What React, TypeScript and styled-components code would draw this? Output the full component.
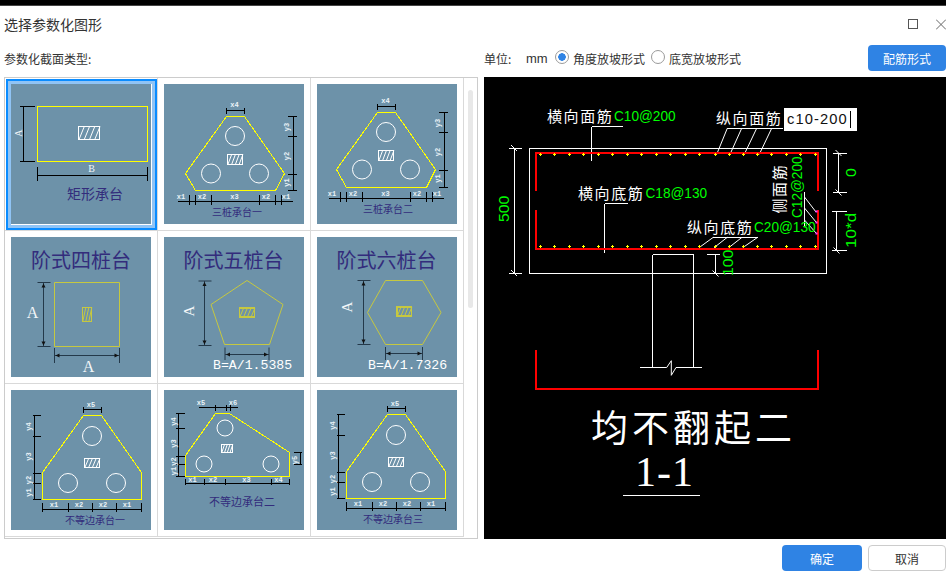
import React, { FC } from 'react';
import styled, { createGlobalStyle } from 'styled-components';

const CJK = '"Noto Sans CJK SC", "Liberation Sans", sans-serif';
const MONO = '"Liberation Mono", "Noto Sans CJK SC", monospace';

const GlobalStyle = createGlobalStyle`
  html, body {
    margin: 0;
    padding: 0;
    background: #fff;
    overflow: hidden;
  }
`;

const Page = styled.div`
  width: 946px;
  height: 576px;
  display: flex;
  flex-direction: column;
  overflow: hidden;
  background: #fff;
  font-family: ${CJK};
  color: #333;
`;

const TopEdge = styled.div`
  height: 5px;
  flex: none;
  background: #000;
  border-bottom: 1px solid #444;
`;

const TitleBar = styled.div`
  height: 39px;
  flex: none;
  display: flex;
  align-items: center;
  justify-content: space-between;
  padding-left: 4px;
`;

const Title = styled.div`
  font-size: 14px;
  color: #333;
  padding-bottom: 4px;
`;

const WindowButtons = styled.div`
  display: flex;
  align-items: center;
  gap: 18px;
  margin-bottom: 3px;
`;

const Toolbar = styled.div`
  height: 32px;
  flex: none;
  display: flex;
`;

const SectionLabel = styled.div`
  width: 480px;
  box-sizing: border-box;
  padding: 5px 0 0 4px;
  font-size: 12px;
  line-height: 17px;
  color: #333;
`;

const Options = styled.div`
  flex: 1;
  display: flex;
  align-items: flex-start;
  font-size: 12px;
  line-height: 17px;
  padding: 5px 0 0 4px;
  color: #333;
`;

const UnitLabel = styled.span`
  width: 42px;
`;

const UnitValue = styled.span`
  font-family: "Liberation Sans", sans-serif;
  font-size: 13px;
  width: 29px;
`;

const RadioDot = styled.span<{ $on?: boolean }>`
  width: 14px;
  height: 14px;
  box-sizing: border-box;
  flex: none;
  border: 1px solid #9a9a9a;
  border-radius: 50%;
  margin: 0 4px 0 0;
  background: ${(p) => (p.$on ? 'radial-gradient(circle, #2f83e4 0 3.5px, #fff 4px)' : '#fff')};
`;

const RadioText = styled.span`
  margin-right: 6px;
  white-space: nowrap;
`;

const PrimaryButton = styled.button<{ $width: number }>`
  width: ${(p) => p.$width}px;
  height: 26px;
  flex: none;
  border: 0;
  border-radius: 4px;
  background: #2f83e4;
  color: #fff;
  font-family: ${CJK};
  font-size: 12px;
  padding: 0;
`;

const RebarButton = styled(PrimaryButton)`
  margin: -5px 0 0 auto;
`;

const GhostButton = styled.button`
  width: 78px;
  height: 26px;
  box-sizing: border-box;
  border: 1px solid #ccc;
  border-radius: 4px;
  background: #fff;
  color: #333;
  font-family: ${CJK};
  font-size: 12px;
  padding: 0;
`;

const Body = styled.div`
  height: 462px;
  flex: none;
  display: flex;
  gap: 6px;
  padding-left: 4px;
`;

const Panel = styled.div`
  width: 474px;
  box-sizing: border-box;
  border: 1px solid #ccc;
  display: flex;
`;

const Grid = styled.div`
  width: 459px;
  display: grid;
  grid-template-columns: repeat(3, 153px);
  grid-auto-rows: 153px;
`;

const Cell = styled.div<{ $selected?: boolean }>`
  position: relative;
  box-sizing: border-box;
  padding: 6px;
  border-right: 1px solid #d9d9d9;
  border-bottom: 1px solid #d9d9d9;

  &::after {
    content: '';
    display: ${(p) => (p.$selected ? 'block' : 'none')};
    position: absolute;
    inset: 1px 0 0 1px;
    border: 2px solid #0a8cff;
    box-shadow: inset 0 0 0 3px #90c4f5;
  }
`;

const Thumb = styled.svg`
  display: block;
  width: 140px;
  height: 140px;
  background: #6d92a9;
`;

const ScrollTrack = styled.div`
  flex: 1;
  display: flex;
  justify-content: center;
  padding-top: 12px;
`;

const ScrollThumb = styled.div`
  width: 5px;
  height: 218px;
  border-radius: 3px;
  background: #e8e8e8;
`;

const Canvas = styled.div`
  position: relative;
  width: 462px;
  height: 462px;
  background: #000;
`;

const Drawing = styled.svg`
  display: block;
  width: 462px;
  height: 462px;
`;

const InlineEditor = styled.div`
  position: absolute;
  left: 300px;
  top: 31px;
  width: 73px;
  height: 23px;
  box-sizing: border-box;
  padding-left: 3px;
  background: #fff;
  color: #111;
  font-family: "Liberation Sans", sans-serif;
  font-size: 14.7px;
  letter-spacing: 1.1px;
  line-height: 23px;
  white-space: nowrap;

  &::after {
    content: '';
    position: absolute;
    left: 66px;
    top: 3px;
    width: 1px;
    height: 17px;
    background: #000;
  }
`;

const Footer = styled.div`
  flex: 1;
  display: flex;
  justify-content: flex-end;
  align-items: flex-start;
  gap: 6px;
  padding-top: 6px;
`;

const TinyText = styled.text`
  font-family: ${MONO};
  font-size: 7px;
  font-weight: 700;
  fill: #eaf2f7;
  text-anchor: middle;
  dominant-baseline: central;
`;

const CapName = styled.text<{ $size: number }>`
  font-family: ${CJK};
  font-size: ${(p) => p.$size}px;
  fill: #332c7c;
  text-anchor: middle;
  dominant-baseline: central;
`;

const DimLetter = styled.text<{ $size: number }>`
  font-family: "Liberation Serif", serif;
  font-size: ${(p) => p.$size}px;
  fill: #f2f6f8;
  text-anchor: middle;
  dominant-baseline: central;
`;

const Formula = styled.text`
  font-family: ${MONO};
  font-size: 13.2px;
  fill: #fff;
  dominant-baseline: central;
`;

const CadNote = styled.text`
  font-family: ${CJK};
  font-size: 15px;
  letter-spacing: 1.6px;
  fill: #fff;
  dominant-baseline: central;
`;

const CadValueText = styled.text`
  font-family: "Liberation Sans", sans-serif;
  font-size: 15px;
  fill: #00ff00;
  dominant-baseline: central;
`;

const CadCaption = styled.text`
  font-family: ${CJK};
  font-size: 37px;
  letter-spacing: 4px;
  fill: #fff;
  dominant-baseline: central;
`;

const CadSection = styled.text`
  font-family: "Liberation Serif", serif;
  font-size: 42px;
  letter-spacing: 1px;
  fill: #fff;
  dominant-baseline: central;
`;

// CAD text is narrower and evenly spaced, so every char gets the same slot
const CadValue: FC<{ x: number; y: number; vertical?: boolean; children: string }> = ({ x, y, vertical, children }) => (
  <CadValueText
    x={x}
    y={y}
    textLength={children.length * 8.8}
    lengthAdjust="spacingAndGlyphs"
    transform={vertical ? `rotate(-90 ${x} ${y})` : undefined}
  >
    {children}
  </CadValueText>
);

type Label = [string, number, number, boolean?];

const Tiny: FC<{ l: Label }> = ({ l: [t, x, y, rotated] }) => (
  <TinyText x={x} y={y} transform={rotated ? `rotate(-90 ${x} ${y})` : undefined}>
    {t}
  </TinyText>
);

const Hatch: FC<{ x: number; y: number; w: number; h: number; color?: string }> = ({ x, y, w, h, color = '#fff' }) => {
  const n = w > h ? 4 : 3;
  const step = w / n;
  const d = Array.from({ length: n }, (_, i) => {
    const x0 = x + step * i + step * 0.1;
    return `M${x0} ${y + h}L${x0 + Math.min(step, h * 0.45)} ${y}`;
  }).join('');
  return (
    <g fill="none" stroke={color} strokeWidth={1}>
      <rect x={x} y={y} width={w} height={h} strokeWidth={1.2} shapeRendering="crispEdges" />
      <path d={d} />
    </g>
  );
};

type Cap = {
  outline: string;
  circles: [number, number][];
  r: number;
  hatch: [number, number, number, number];
  dims: string;
  labels: Label[];
  name: string;
  nameX: number;
  nameY: number;
  nameSize: number;
};

const threePile = (name: string, dx: number, dy: number, by: number): Cap => ({
  outline: `${62.5 + dx},${32.5 + dy} ${80.5 + dx},${32.5 + dy} ${120.5 + dx},${89.5 + dy} ${111.5 + dx},${106.5 + by} ${31.5 + dx},${106.5 + by} ${21.5 + dx},${89.5 + dy}`,
  circles: [
    [71 + dx, 52 + dy],
    [47 + dx, 89.5 + dy],
    [95 + dx, 89.5 + dy],
  ],
  r: 9.5,
  hatch: [63.5 + dx, 70.5 + dy, 15, 10],
  dims:
    `M${62.5 + dx} ${26.5 + dy}H${80.5 + dx}M${62.5 + dx} ${23.5 + dy}V${29.5 + dy}M${80.5 + dx} ${23.5 + dy}V${29.5 + dy}` +
    `M${129.5 + dx} ${32.5 + dy}V${106.5 + by}M${123.5 + dx} ${32.5 + dy}H${132.5 + dx}M${123.5 + dx} ${52.5 + dy}H${132.5 + dx}M${123.5 + dx} ${90.5 + dy}H${132.5 + dx}M${123.5 + dx} ${106.5 + by}H${132.5 + dx}` +
    `M${13.5 + dx} ${117.5 + by}H${128.5 + dx}` +
    [25.5, 31.5, 47.5, 95.5, 111.5, 117.5].map((x) => `M${x + dx} ${110.5 + by}V${120.5 + by}`).join(''),
  labels: [
    ['x4', 70.5 + dx, 20.5 + dy],
    ['y3', 123 + dx, 43 + dy, true],
    ['y2', 123 + dx, 72 + dy, true],
    ['y1', 123 + dx, 98.5 + dy, true],
    ['x1', 17 + dx, 112.5 + by],
    ['x2', 38 + dx, 112.5 + by],
    ['x3', 70.5 + dx, 112.5 + by],
    ['x2', 102 + dx, 112.5 + by],
    ['x1', 122 + dx, 112.5 + by],
  ],
  name,
  nameX: 73 + dx,
  nameY: 127.5 + by,
  nameSize: 10,
});

const unequalFlat = (name: string, dx: number, dy: number, nameX: number): Cap => ({
  outline: `${72.5 + dx},${25.5 + dy} ${90.5 + dx},${25.5 + dy} ${130.5 + dx},${82.5 + dy} ${130.5 + dx},${109.5 + dy} ${31.5 + dx},${109.5 + dy} ${31.5 + dx},${82.5 + dy}`,
  circles: [
    [81 + dx, 46 + dy],
    [57 + dx, 93 + dy],
    [105 + dx, 93 + dy],
  ],
  r: 9.5,
  hatch: [73.5 + dx, 68.5 + dy, 15, 9],
  dims:
    `M${72.5 + dx} ${19.5 + dy}H${90.5 + dx}M${72.5 + dx} ${16.5 + dy}V${22.5 + dy}M${90.5 + dx} ${16.5 + dy}V${22.5 + dy}` +
    `M${23.5 + dx} ${25.5 + dy}V${109.5 + dy}` +
    [25.5, 46.5, 83.5, 93.5, 109.5].map((y) => `M${21.5 + dx} ${y + dy}H${29.5 + dx}`).join('') +
    `M${31.5 + dx} ${119.5 + dy}H${130.5 + dx}` +
    [31.5, 57.5, 81.5, 105.5, 130.5].map((x) => `M${x + dx} ${112.5 + dy}V${121.5 + dy}`).join(''),
  labels: [
    ['x5', 80 + dx, 14.5 + dy],
    ['y4', 17.5 + dx, 36.5 + dy, true],
    ['y3', 17.5 + dx, 66.5 + dy, true],
    ['y2', 17.5 + dx, 90 + dy, true],
    ['y1', 17.5 + dx, 102.5 + dy, true],
    ['x1', 43 + dx, 114.5 + dy],
    ['x2', 68 + dx, 114.5 + dy],
    ['x2', 92 + dx, 114.5 + dy],
    ['x1', 116 + dx, 114.5 + dy],
  ],
  name,
  nameX,
  nameY: 129.5 + dy,
  nameSize: 10,
});

const unequalSlope: Cap = {
  outline: '51.5,23.5 65.5,23.5 125.5,62.5 125.5,86.5 21.5,86.5 21.5,65.5',
  circles: [
    [61, 38],
    [40, 74],
    [107, 74],
  ],
  r: 8,
  hatch: [57.5, 54.5, 11, 8],
  dims:
    'M34.5 17.5H73.5M51.5 14.5V20.5M62.5 14.5V20.5M66.5 14.5V20.5' +
    'M14.5 23.5V86.5M11.5 23.5H20.5M11.5 38.5H20.5M11.5 66.5H20.5M11.5 74.5H20.5M11.5 86.5H20.5' +
    'M136.5 62.5V74.5M129.5 62.5H137.5M129.5 74.5H137.5' +
    'M21.5 93.5H125.5M21.5 88.5V94.5M40.5 88.5V94.5M61.5 88.5V94.5M107.5 88.5V94.5M125.5 88.5V94.5',
  labels: [
    ['x5', 37, 13],
    ['x6', 69, 13],
    ['y4', 10, 31.5, true],
    ['y3', 10, 53.5, true],
    ['y2', 10, 71.5, true],
    ['y1', 10, 81, true],
    ['y5', 131, 70, true],
    ['x1', 28.5, 89.5],
    ['x2', 49, 89.5],
    ['x3', 82.5, 89.5],
    ['x4', 114.5, 89.5],
  ],
  name: '不等边承台二',
  nameX: 78,
  nameY: 110.5,
  nameSize: 11,
};

const CapFigure: FC<{ cap: Cap }> = ({ cap }) => (
  <Thumb viewBox="0 0 140 140">
    <polygon points={cap.outline} fill="none" stroke="#ffff00" shapeRendering="crispEdges" />
    {cap.circles.map(([cx, cy]) => (
      <circle key={`${cx}-${cy}`} cx={cx} cy={cy} r={cap.r} fill="none" stroke="#fff" />
    ))}
    <Hatch x={cap.hatch[0]} y={cap.hatch[1]} w={cap.hatch[2]} h={cap.hatch[3]} />
    <path d={cap.dims} fill="none" stroke="#000" shapeRendering="crispEdges" />
    {cap.labels.map((l, i) => (
      <Tiny key={i} l={l} />
    ))}
    <CapName x={cap.nameX} y={cap.nameY} $size={cap.nameSize}>
      {cap.name}
    </CapName>
  </Thumb>
);

const RectCap: FC = () => (
  <Thumb viewBox="0 0 140 140">
    <rect x={26.5} y={22.5} width={110} height={55} fill="none" stroke="#ffff00" shapeRendering="crispEdges" />
    <Hatch x={67.5} y={42.5} w={21} h={13} />
    <path
      d="M12.5 22.5V77.5M8.5 22.5H23.5M8.5 77.5H23.5M26.5 91.5H136.5M26.5 82.5V96.5M136.5 82.5V96.5"
      fill="none"
      stroke="#000"
      shapeRendering="crispEdges"
    />
    <DimLetter x={7} y={49} $size={10} transform="rotate(-90 7 49)">
      A
    </DimLetter>
    <DimLetter x={80.5} y={84} $size={10}>
      B
    </DimLetter>
    <CapName x={84} y={108.5} $size={14}>
      矩形承台
    </CapName>
  </Thumb>
);

type Stepped = {
  title: string;
  titleX: number;
  outline: string;
  hatch: [number, number, number, number];
  hatchColor: string;
  leftX: number;
  leftTop: number;
  leftBottom: number;
  baseY: number;
  baseLeft: number;
  baseRight: number;
  baseTop: number;
  baseEnd: number;
};

const SteppedDims: FC<{ s: Stepped }> = ({ s }) => {
  const ink = '#24394a';
  const { leftX: x, leftTop: t, leftBottom: b, baseY: y, baseLeft: l, baseRight: r } = s;
  return (
    <g>
      <path
        d={`M${x} ${t}V${b}M${x - 6} ${t}H${x + 7}M${x - 6} ${b}H${x + 7}M${l} ${y}H${r}M${l} ${s.baseTop}V${s.baseEnd}M${r} ${s.baseTop}V${s.baseEnd}`}
        fill="none"
        stroke={ink}
        strokeWidth={1}
      />
      <polygon
        fill="#111"
        points={`${x},${t + 1} ${x - 2},${t + 5} ${x + 2},${t + 5}`}
      />
      <polygon
        fill="#111"
        points={`${x},${b - 1} ${x - 2},${b - 5} ${x + 2},${b - 5}`}
      />
      <polygon
        fill="#111"
        points={`${l + 1},${y} ${l + 5},${y - 2} ${l + 5},${y + 2}`}
      />
      <polygon
        fill="#111"
        points={`${r - 1},${y} ${r - 5},${y - 2} ${r - 5},${y + 2}`}
      />
    </g>
  );
};

const SteppedCap: FC<{ s: Stepped; children: React.ReactNode }> = ({ s, children }) => (
  <Thumb viewBox="0 0 140 140">
    <CapName x={s.titleX} y={22} $size={20}>
      {s.title}
    </CapName>
    <polygon points={s.outline} fill="none" stroke="#c6c840" />
    <Hatch x={s.hatch[0]} y={s.hatch[1]} w={s.hatch[2]} h={s.hatch[3]} color={s.hatchColor} />
    <SteppedDims s={s} />
    {children}
  </Thumb>
);

const four: Stepped = {
  title: '阶式四桩台',
  titleX: 70,
  outline: '43.5,45.5 108.5,45.5 108.5,109.5 43.5,109.5',
  hatch: [71.5, 70.5, 9, 14],
  hatchColor: '#c6c840',
  leftX: 32.5,
  leftTop: 45.5,
  leftBottom: 109.5,
  baseY: 118.5,
  baseLeft: 43.5,
  baseRight: 108.5,
  baseTop: 111,
  baseEnd: 126,
};

const five: Stepped = {
  title: '阶式五桩台',
  titleX: 69.5,
  outline: '83,43.5 119,67.5 105.5,107.5 60.5,107.5 47,67.5',
  hatch: [75.5, 71, 15, 9],
  hatchColor: '#c6c840',
  leftX: 40.5,
  leftTop: 44,
  leftBottom: 108.5,
  baseY: 117.5,
  baseLeft: 61,
  baseRight: 105,
  baseTop: 110.5,
  baseEnd: 123,
};

const six: Stepped = {
  title: '阶式六桩台',
  titleX: 69.5,
  outline: '68.5,43.5 105.5,43.5 124,75.5 105.5,107.5 68.5,107.5 50.5,75.5',
  hatch: [80, 70, 14.5, 9],
  hatchColor: '#c6c840',
  leftX: 46.5,
  leftTop: 43.5,
  leftBottom: 107.5,
  baseY: 116.5,
  baseLeft: 68.5,
  baseRight: 105.5,
  baseTop: 110,
  baseEnd: 123,
};

const dotXs = [540, 554, 569, 583, 598, 612, 627, 641, 656, 670, 685, 699, 715, 729, 743, 757, 771, 786, 800, 815];

const plusMarks = (y: number) => dotXs.map((x) => `M${x - 1} ${y}H${x + 2}M${x + 0.5} ${y - 1.5}V${y + 1.5}`).join('');

const vText = (x: number, y: number) => `rotate(-90 ${x} ${y})`;

const SectionDrawing: FC = () => (
  <Drawing viewBox="484 77 462 462">
    <g fill="none" stroke="#fff" strokeWidth={1} shapeRendering="crispEdges">
      <rect x={529.5} y={148.5} width={297} height={125} />
      <path d="M652.5 254.5H693.5M652.5 254.5V367.5M693.5 254.5V367.5" />
      <path d="M591.5 126.5H622.5M591.5 126.5V161M727 128.5H782.5M604.5 203.5H628M604.5 203.5V252.5M713 237.5H758M804.5 192V227" />
      <path d="M514.5 148.5V273.5M509 148.5H522M509 273.5H522M838.5 153.5V192.5M833 153.5H847M833 192.5H847M836.5 211.5V250.5M832 211.5H847M832 250.5H847M715.5 254.5V273.5M707 254.5H720" />
    </g>
    <g fill="none" stroke="#fff" strokeWidth={1}>
      <path d="M727.3 128.3L716.7 154.3M741.7 128.3L730 154.3M756.7 128.3L744.3 154.3M771.7 128.3L759.3 154.3" />
      <path d="M713.3 237.3L699 247.7M727.3 237.3L714 247.7M742 237.3L728.7 247.7M757.7 237.3L742.7 247.7" />
      <path d="M804.5 197L816 212M804.5 208L816 222M804.5 220L816 233" />
      <path d="M640 367.5H666.7L671.3 360.7V375.3L676 367.5H702" />
      <path d="M511 145L517 151M511 270L517 276M835.5 150L841.5 156M835.5 189.5L841.5 195.5M833.5 247.5L839.5 253.5M712.5 270.5L718.5 276.5" />
    </g>
    <path
      d="M536 191V153H818V191M536 210V249H818V210M536 350V388.5H818V350"
      fill="none"
      stroke="#ff0000"
      strokeWidth={2}
      shapeRendering="crispEdges"
    />
    <path d={plusMarks(154.5) + plusMarks(246.5)} stroke="#ffff00" fill="none" shapeRendering="crispEdges" />
    <path d="M816.5 210.5v2M816.5 221.5v2M816.5 232.5v2" stroke="#ff33ff" strokeWidth={2} fill="none" />

    <CadNote x={547} y={115}>横向面筋</CadNote>
    <CadValue x={614} y={115}>C10@200</CadValue>
    <CadNote x={716} y={117.5}>纵向面筋</CadNote>
    <CadNote x={578} y={192.5}>横向底筋</CadNote>
    <CadValue x={645.5} y={192.5}>C18@130</CadValue>
    <CadNote x={687} y={226.5}>纵向底筋</CadNote>
    <CadValue x={754} y={226.5}>C20@130</CadValue>

    <CadNote x={778} y={213.5} transform={vText(778, 213.5)}>侧面筋</CadNote>
    <CadValue x={796.5} y={218} vertical>C12@200</CadValue>
    <CadValue x={503.5} y={222} vertical>500</CadValue>
    <CadValue x={850} y={177} vertical>0</CadValue>
    <CadValue x={850} y={248} vertical>10*d</CadValue>
    <CadValue x={727} y={276} vertical>100</CadValue>

    <CadCaption x={591} y={426}>均不翻起二</CadCaption>
    <CadSection x={635} y={472}>1-1</CadSection>
    <path d="M623 495.5H700" stroke="#fff" shapeRendering="crispEdges" />
  </Drawing>
);

const App: FC = () => (
  <Page>
    <GlobalStyle />
    <TopEdge />
    <TitleBar>
      <Title>选择参数化图形</Title>
      <WindowButtons>
        <svg width="10" height="10" viewBox="0 0 10 10">
          <rect x="0.5" y="0.5" width="9" height="9" fill="none" stroke="#555" />
        </svg>
        <svg width="10" height="11" viewBox="0 0 10 11">
          <path d="M0 0.5L10 10.5M10 0.5L0 10.5" fill="none" stroke="#666" />
        </svg>
      </WindowButtons>
    </TitleBar>
    <Toolbar>
      <SectionLabel>参数化截面类型:</SectionLabel>
      <Options>
        <UnitLabel>单位:</UnitLabel>
        <UnitValue>mm</UnitValue>
        <RadioDot $on />
        <RadioText>角度放坡形式</RadioText>
        <RadioDot />
        <RadioText>底宽放坡形式</RadioText>
        <RebarButton $width={78}>配筋形式</RebarButton>
      </Options>
    </Toolbar>
    <Body>
      <Panel>
        <Grid>
          <Cell $selected>
            <RectCap />
          </Cell>
          <Cell>
            <CapFigure cap={threePile('三桩承台一', 0, 0, 0)} />
          </Cell>
          <Cell>
            <CapFigure cap={threePile('三桩承台二', -2, -4, -3)} />
          </Cell>
          <Cell>
            <SteppedCap s={four}>
              <DimLetter x={21.5} y={75} $size={16}>A</DimLetter>
              <DimLetter x={77.5} y={129} $size={16}>A</DimLetter>
            </SteppedCap>
          </Cell>
          <Cell>
            <SteppedCap s={five}>
              <DimLetter x={25} y={74} $size={15} transform="rotate(-90 25 74)">A</DimLetter>
              <Formula x={49} y={128}>B=A/1.5385</Formula>
            </SteppedCap>
          </Cell>
          <Cell>
            <SteppedCap s={six}>
              <DimLetter x={30} y={70} $size={15} transform="rotate(-90 30 70)">A</DimLetter>
              <Formula x={51} y={128}>B=A/1.7326</Formula>
            </SteppedCap>
          </Cell>
          <Cell>
            <CapFigure cap={unequalFlat('不等边承台一', 0, 0, 84)} />
          </Cell>
          <Cell>
            <CapFigure cap={unequalSlope} />
          </Cell>
          <Cell>
            <CapFigure cap={unequalFlat('不等边承台三', -2, -1, 76)} />
          </Cell>
        </Grid>
        <ScrollTrack>
          <ScrollThumb />
        </ScrollTrack>
      </Panel>
      <Canvas>
        <SectionDrawing />
        <InlineEditor>c10-200</InlineEditor>
      </Canvas>
    </Body>
    <Footer>
      <PrimaryButton $width={80}>确定</PrimaryButton>
      <GhostButton>取消</GhostButton>
    </Footer>
  </Page>
);

export default App;
